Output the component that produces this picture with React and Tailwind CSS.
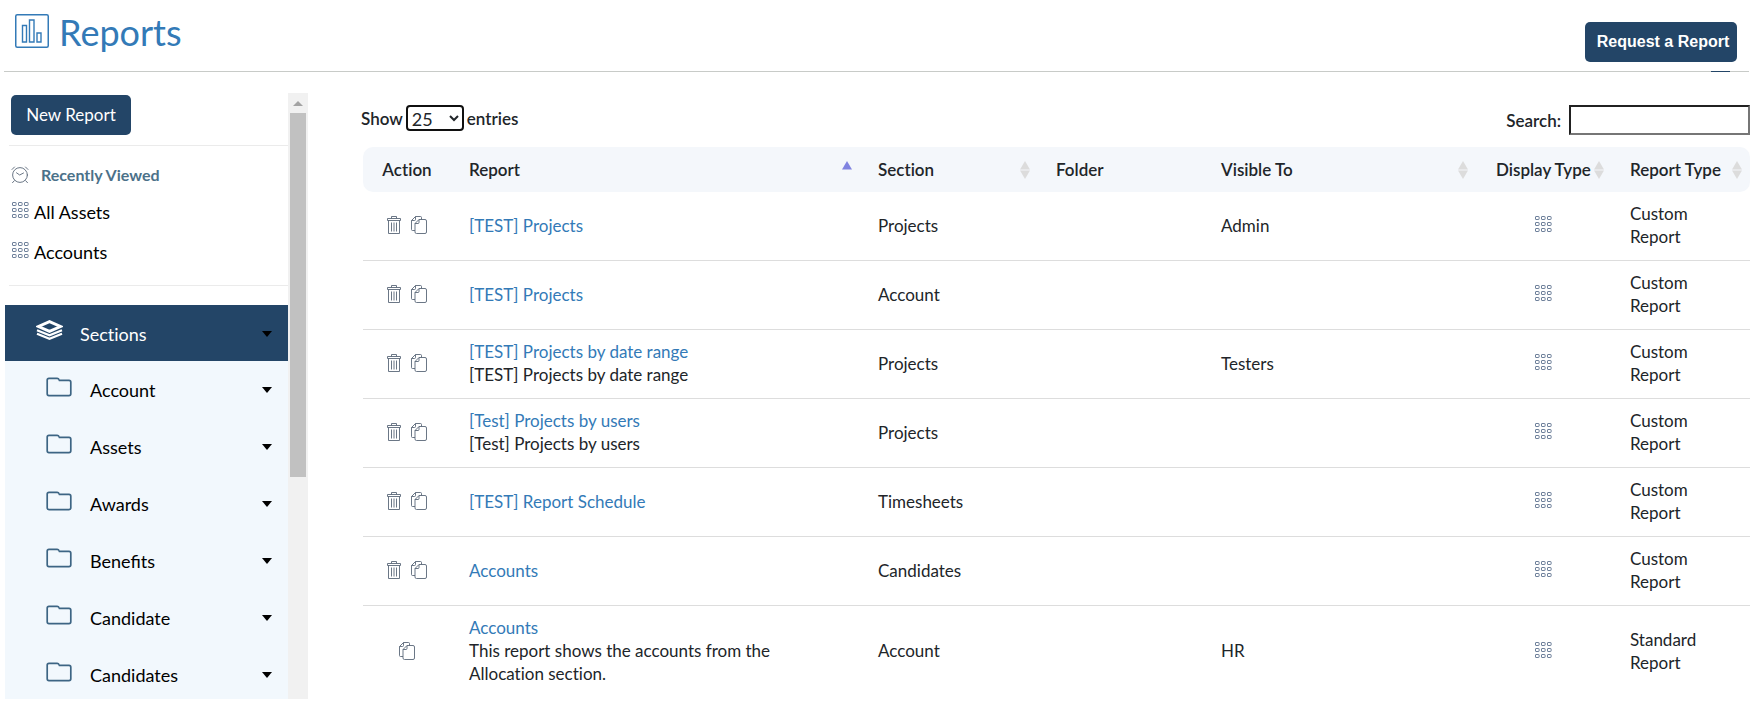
const sections = ["Account", "Assets", "Awards", "Benefits", "Candidate", "Candidates"];

const reports = [
  { name: "[TEST] Projects", section: "Projects", visibleTo: "Admin", type: "Custom Report", removable: true },
  { name: "[TEST] Projects", section: "Account", visibleTo: "", type: "Custom Report", removable: true },
  { name: "[TEST] Projects by date range", description: "[TEST] Projects by date range", section: "Projects", visibleTo: "Testers", type: "Custom Report", removable: true },
  { name: "[Test] Projects by users", description: "[Test] Projects by users", section: "Projects", visibleTo: "", type: "Custom Report", removable: true },
  { name: "[TEST] Report Schedule", section: "Timesheets", visibleTo: "", type: "Custom Report", removable: true },
  { name: "Accounts", section: "Candidates", visibleTo: "", type: "Custom Report", removable: true },
  { name: "Accounts", description: "This report shows the accounts from the Allocation section.", section: "Account", visibleTo: "HR", type: "Standard Report", removable: false },
];

function ChartIcon() {
  return (
    <svg width="34" height="34" viewBox="0 0 34 34" fill="none" stroke="#337ab7" aria-hidden="true">
      <rect x="0.75" y="0.75" width="32.5" height="32.5" rx="1.5" strokeWidth="1.5" />
      <path d="M7.5 11.500h4v16.500h-4zM14.500 6h4.500v22h-4.500zM22 19h4v9h-4z" strokeWidth="1.4" />
    </svg>
  );
}

function GridIcon() {
  return (
    <svg width="17" height="17" viewBox="0 0 17 17" fill="none" stroke="#5f7390" aria-hidden="true">
      {[0, 6, 12].map((y) =>
        [0, 6, 12].map((x) => (
          <rect key={`${x}-${y}`} x={x + 0.5} y={y + 0.5} width="3.600" height="3" rx="0.5" strokeWidth="0.9" />
        ))
      )}
    </svg>
  );
}

function ClockIcon() {
  return (
    <svg width="18" height="18" viewBox="0 0 18 18" fill="none" stroke="#5a6878" strokeLinecap="round" aria-hidden="true">
      <circle cx="9" cy="9" r="7.400" strokeWidth="0.9" />
      <path d="M5.500 6.800 8.700 9 12.500 7M1 3.500 3.500 1M17 3.500 14.500 1M3.300 14.700 1.500 16.700M14.700 14.700l1.800 2" strokeWidth="0.9" />
    </svg>
  );
}

function LayersIcon() {
  return (
    <svg width="27" height="20" viewBox="0 0 27 20" fill="none" stroke="#ffffff" aria-hidden="true">
      <path d="M13.500 1.600 24.500 6.500 13.500 11.400 2.500 6.500z" strokeWidth="2.800" />
      <path d="M1 10.200 13.500 15.200 26 10.200M1 13.800 13.500 18.700 26 13.800" strokeWidth="2.200" />
    </svg>
  );
}

function FolderIcon() {
  return (
    <svg width="26" height="20" viewBox="0 0 26 20" fill="none" stroke="#3d6584" strokeWidth="1.700" aria-hidden="true">
      <path d="M3 1.300h8.200q1.300 0 1.800 1.200l.4.900H23q1.800 0 1.800 1.800v11.600q0 1.800-1.800 1.800H3q-1.800 0-1.800-1.800V3.100Q1.200 1.300 3 1.300z" />
    </svg>
  );
}

function Caret() {
  return (
    <svg width="10" height="6" viewBox="0 0 10 6" fill="#000000" aria-hidden="true">
      <path d="M0 0h10L5 6z" />
    </svg>
  );
}

function TrashIcon() {
  return (
    <svg width="14" height="18" viewBox="0 0 14 18" fill="none" stroke="#5a6878" aria-hidden="true">
      <path d="M4.500 2.500v-2h5v2M.5 2.500h13v2H.5zM1.500 4.500v13h11v-13M4.500 6.500v9M7 6.500v9M9.500 6.500v9" strokeWidth="0.9" />
    </svg>
  );
}

function CopyIcon() {
  return (
    <svg width="16" height="18" viewBox="0 0 16 18" fill="none" stroke="#5a6878" aria-hidden="true">
      <path d="M4 14.500H1.500q-1 0-1-1V4.500l4-4h5q1 0 1 1v2M.5 4.500h3q1 0 1-1v-3" strokeWidth="0.9" />
      <path d="M8 3.500h6q1.500 0 1.500 1.500v11q0 1.500-1.500 1.500H5.500q-1.500 0-1.500-1.500V7.500zM4 7.500h3q1 0 1-1v-3" strokeWidth="0.9" />
    </svg>
  );
}

function SortIcon({ ascending }) {
  return (
    <svg width="10" height="18" viewBox="0 0 10 18" className="shrink-0" aria-hidden="true">
      <path d="M5 0l5 8.500H0z" fill={ascending ? "#8083e0" : "#dcdcdc"} />
      {!ascending && <path d="M0 9.500h10L5 18z" fill="#dcdcdc" />}
    </svg>
  );
}

function HeaderCell({ label, className, sort }) {
  return (
    <th scope="col" className={`h-[45px] bg-[#f4f7fb] py-0 pl-[18px] text-left font-semibold ${className}`}>
      <div className="flex items-center justify-between">
        <span className="whitespace-nowrap">{label}</span>
        {sort && <SortIcon ascending={sort === "asc"} />}
      </div>
    </th>
  );
}

function Sidebar() {
  return (
    <aside className="mt-[21px] flex h-[606px] w-[303px] shrink-0 overflow-hidden text-lg text-black">
      <div className="min-w-0 flex-1">
        <div className="ml-1 border-b border-[#ebebeb] pt-0.5 pb-2.5 pl-0.5">
          <button className="h-10 w-[120px] rounded-[5px] bg-[#234567] text-[17px] text-white">New Report</button>
        </div>
        <div className="ml-1 border-b border-[#ebebeb] pt-3 pb-[13px]">
          <h2 className="flex h-[34px] items-center gap-3 pl-0.5 text-base font-bold text-[#4b7189]">
            <ClockIcon />
            Recently Viewed
          </h2>
          <a href="#all-assets" className="flex h-10 items-center gap-[5px] pl-[3px]">
            <span className="mb-1"><GridIcon /></span>
            All Assets
          </a>
          <a href="#accounts" className="flex h-10 items-center gap-[5px] pl-[3px]">
            <span className="mb-1"><GridIcon /></span>
            Accounts
          </a>
        </div>
        <nav className="mt-[19px]">
          <button className="flex h-14 w-full items-center bg-[#234567] pr-4 pl-[31px] text-left text-white">
            <span className="mb-1.5"><LayersIcon /></span>
            <span className="ml-[17px] flex-1 pt-0.5">Sections</span>
            <span className="pt-0.5"><Caret /></span>
          </button>
          <div className="bg-[#f2f8fd] [font-variant-ligatures:normal]">
            {sections.map((name) => (
              <button key={name} className="flex h-[57px] w-full items-center pr-4 pl-[41px] text-left">
                <span className="mb-1.5"><FolderIcon /></span>
                <span className="ml-[18px] flex-1">{name}</span>
                <Caret />
              </button>
            ))}
          </div>
        </nav>
      </div>
      <div className="flex w-5 flex-col items-center bg-[#f1f1f1]" aria-hidden="true">
        <div className="flex h-5 items-center">
          <svg width="10" height="5" viewBox="0 0 10 5" fill="#a3a3a3"><path d="M5 0l5 5H0z" /></svg>
        </div>
        <div className="h-[364px] w-4 bg-[#c1c1c1]" />
      </div>
    </aside>
  );
}

function ReportRow({ report, last }) {
  return (
    <tr className={last ? "" : "border-b border-[#dddddd]"}>
      <td className="pt-2.5 pb-3">
        <div className="flex items-center justify-center gap-2.5">
          {report.removable && <button aria-label="Delete report"><TrashIcon /></button>}
          <button aria-label="Copy report"><CopyIcon /></button>
        </div>
      </td>
      <td className="pt-2.5 pr-20 pb-3 pl-[18px]">
        <a href="#report" className="text-[#337ab7]">{report.name}</a>
        {report.description && <p>{report.description}</p>}
      </td>
      <td className="pb-0.5 pl-[18px]">{report.section}</td>
      <td />
      <td className="pb-0.5 pl-[18px]">{report.visibleTo}</td>
      <td className="pr-1 pb-[3px]">
        <div className="flex justify-center"><GridIcon /></div>
      </td>
      <td className="pt-2.5 pr-10 pb-3 pl-[18px]">{report.type}</td>
    </tr>
  );
}

export default function App() {
  return (
    <div className="min-h-screen bg-white font-['Lato',sans-serif] text-[17px] leading-[23px] text-[#212529] [font-variant-ligatures:none]">
      <header className="mr-[11px] ml-1 flex h-[72px] items-start justify-between border-b border-[#c8cbc8] pr-3 pl-[11px]">
        <h1 className="flex items-center gap-2.5 pt-[11px] text-4xl leading-[42px] text-[#337ab7]">
          <span className="-mt-0.5"><ChartIcon /></span>
          Reports
        </h1>
        <div className="flex flex-col items-end pt-[22px]">
          <button className="h-10 w-[152px] rounded-[5px] bg-[#234567] pl-1 font-['Liberation_Sans',sans-serif] text-base font-bold whitespace-nowrap text-white">
            Request a Report
          </button>
          <div className="mt-[9px] mr-[7px] h-px w-[19px] bg-[#234567]" />
        </div>
      </header>

      <div className="flex items-start pl-[5px]">
        <Sidebar />
        <main className="min-w-0 flex-1 pt-[33px] pr-[10px] pl-[55px]">
          <div className="-ml-0.5 flex items-start justify-between font-semibold">
            <label className="flex items-center gap-[3px]">
              Show
              <select defaultValue="25" className="h-[26px] w-[58px] rounded-[4px] border-2 border-[#101010] bg-white text-lg leading-5 font-normal">
                <option>10</option>
                <option>25</option>
                <option>50</option>
                <option>100</option>
              </select>
              entries
            </label>
            <label className="flex items-center gap-2">
              Search:
              <input type="search" className="h-[30px] w-[181px] border-2 border-[#767676] [border-style:inset] bg-white px-1 font-normal" />
            </label>
          </div>

          <table className="mt-3 w-full table-fixed border-collapse">
            <thead>
              <tr>
                <th scope="col" className="h-[45px] w-[88px] rounded-l-[10px] bg-[#f4f7fb] p-0 font-semibold">Action</th>
                <HeaderCell label="Report" sort="asc" className="w-[409px] pr-2" />
                <HeaderCell label="Section" sort="both" className="w-[178px] pr-2" />
                <HeaderCell label="Folder" className="w-[165px] pr-2" />
                <HeaderCell label="Visible To" sort="both" className="w-[275px] pr-2.5" />
                <HeaderCell label="Display Type" sort="both" className="w-[134px] pr-2" />
                <HeaderCell label="Report Type" sort="both" className="w-[138px] rounded-r-[10px] pr-2" />
              </tr>
            </thead>
            <tbody>
              {reports.map((report, index) => (
                <ReportRow key={index} report={report} last={index === reports.length - 1} />
              ))}
            </tbody>
          </table>
        </main>
      </div>
    </div>
  );
}
